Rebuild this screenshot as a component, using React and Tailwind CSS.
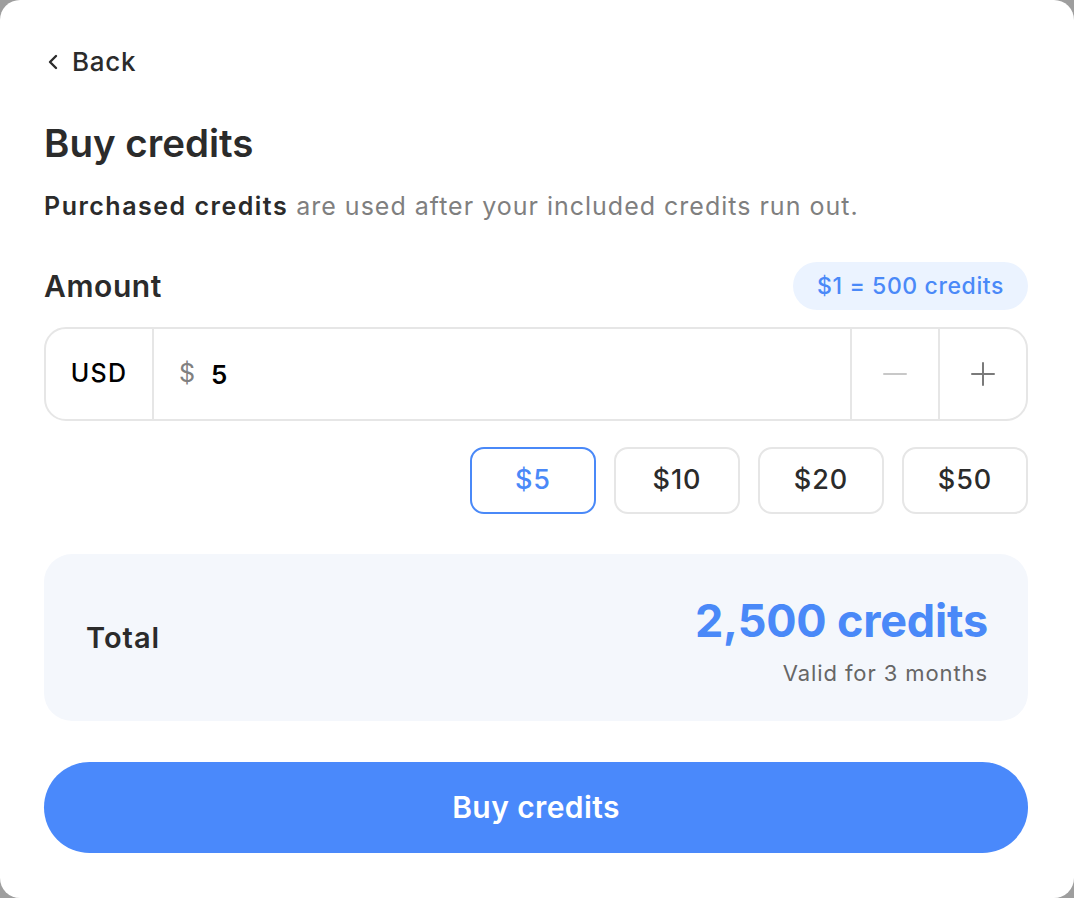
import React from "react";

export default function App() {
  const presets = ["$5", "$10", "$20", "$50"];
  return (
    <div className="w-[1074px] h-[898px] bg-[#9e9e9e]" style={{ fontFamily: "Inter, 'Noto Sans', sans-serif" }}>
      <div className="w-full h-full bg-white rounded-[20px] pl-[44px] pr-[46px] pt-[46px] flex flex-col">
        <div className="flex items-center h-[32px] gap-[12px] text-[#2b2b2b]">
          <svg width="14" height="16" viewBox="0 0 14 16" className="ml-[2px]">
            <path d="M10 2 L4 8 L10 14" fill="none" stroke="#2b2b2b" strokeWidth="2.4" strokeLinecap="round" strokeLinejoin="round" />
          </svg>
          <span className="text-[26px] font-medium leading-none tracking-[0.7px]">Back</span>
        </div>

        <h1 className="mt-[43px] h-[44px] leading-[44px] text-[38.5px] font-semibold text-[#2b2b2b]">Buy credits</h1>

        <p className="mt-[25px] h-[32px] leading-[32px] text-[25px] text-[#7f7f7f] tracking-[1px] whitespace-nowrap">
          <span className="font-semibold text-[#2b2b2b] tracking-[1.5px]">Purchased credits</span> are used after your included credits run out.
        </p>

        <div className="mt-[40px] flex items-center justify-between h-[48px]">
          <span className="text-[30px] font-semibold text-[#2b2b2b] tracking-[0.6px]">Amount</span>
          <span className="h-[48px] px-[24px] flex items-center rounded-full bg-[#ebf3ff] text-[#4a89f8] text-[23px] font-medium tracking-[0.6px]">$1 = 500 credits</span>
        </div>

        <div className="mt-[17px] h-[94px] flex border-2 border-[#e6e6e6] rounded-[22px] overflow-hidden">
          <div className="w-[108px] flex items-center justify-center border-r-2 border-[#e6e6e6] text-[25px] font-medium text-black tracking-[1.2px]">USD</div>
          <div className="flex-1 flex items-center pl-[25px] gap-[16px]">
            <span className="text-[25px] text-[#808080]">$</span>
            <span className="text-[26px] font-semibold text-black">5</span>
          </div>
          <div className="w-[88px] flex items-center justify-center border-l-2 border-[#e6e6e6]">
            <svg width="24" height="24" viewBox="0 0 24 24">
              <path d="M1 12 H23" stroke="#c8c8c8" strokeWidth="2" strokeLinecap="round" />
            </svg>
          </div>
          <div className="w-[88px] flex items-center justify-center border-l-2 border-[#e6e6e6]">
            <svg width="24" height="24" viewBox="0 0 24 24">
              <path d="M1 12 H23 M12 1 V23" stroke="#7a7a7a" strokeWidth="2" strokeLinecap="round" />
            </svg>
          </div>
        </div>

        <div className="mt-[26px] flex justify-end gap-[18px]">
          {presets.map((p, i) => (
            <button
              key={p}
              className={
                i === 0
                  ? "w-[126px] h-[67px] rounded-[14px] border-2 border-[#4a89f8] text-[#4a89f8] text-[27px] font-medium bg-white tracking-[1px]"
                  : "w-[126px] h-[67px] rounded-[14px] border-2 border-[#e6e6e6] text-[#2b2b2b] text-[27px] font-medium bg-white tracking-[1px]"
              }
            >
              {p}
            </button>
          ))}
        </div>

        <div className="mt-[40px] h-[167px] rounded-[28px] bg-[#f4f7fc] flex items-center justify-between pl-[42px] pr-[40px]">
          <span className="text-[29px] font-semibold text-[#2b2b2b] tracking-[1px]">Total</span>
          <div className="flex flex-col items-end pt-[6px]">
            <span className="text-[45px] leading-[52px] font-bold text-[#4a89f8] tracking-[-0.2px]">2,500 credits</span>
            <span className="mt-[12px] text-[22px] leading-[28px] text-[#666666] tracking-[0.9px]">Valid for 3 months</span>
          </div>
        </div>

        <button className="mt-[41px] h-[91px] rounded-full bg-[#4a89fb] text-white text-[30px] font-semibold tracking-[0.4px]">Buy credits</button>
      </div>
    </div>
  );
}
